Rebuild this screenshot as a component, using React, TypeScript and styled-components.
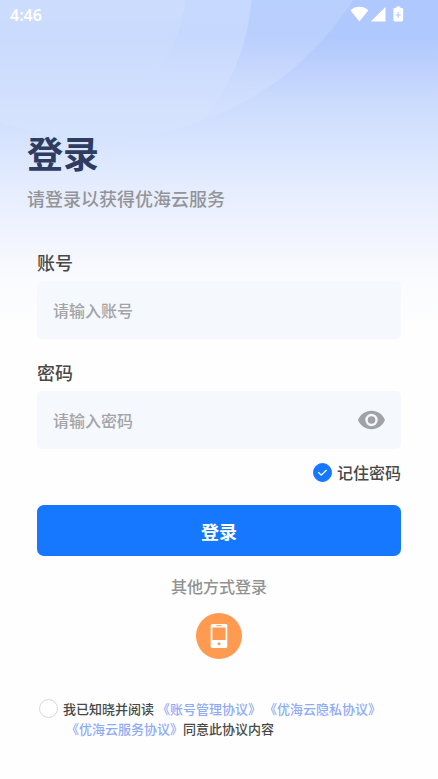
import React, { useState } from "react";
import styled, { createGlobalStyle } from "styled-components";

const GlobalStyle = createGlobalStyle`
  *, *::before, *::after { box-sizing: border-box; }
  body {
    margin: 0;
    background: #fefefe;
    font-family: "Noto Sans CJK SC", "Noto Sans", sans-serif;
    font-weight: 500;
    color: #484848;
  }
  button, input { font: inherit; color: inherit; }
`;

const Page = styled.div`
  position: relative;
  isolation: isolate;
  min-height: 100vh;
  overflow: hidden;
  background: linear-gradient(
    180deg,
    #afc8fd 0,
    #afc8fd 36px,
    #bdd0fd 66px,
    #ccdcfd 104px,
    #dae6fe 152px,
    #e7eefe 196px,
    #f2f5fe 240px,
    #fafbfe 280px,
    #fefefe 330px
  );
`;

const Backdrop = styled.svg`
  position: absolute;
  z-index: -1;
  top: 0;
  left: 0;
`;

const StatusBar = styled.header`
  display: flex;
  align-items: center;
  justify-content: space-between;
  height: 30px;
  padding: 0 33px 0 10px;
  color: #ffffff;
`;

const Clock = styled.time`
  font-family: "Noto Sans", sans-serif;
  font-size: 16px;
  font-weight: 600;
  line-height: 30px;
`;

const StatusIcons = styled.svg`
  display: block;
  margin-bottom: 1px;
`;

const Intro = styled.section`
  padding: 98px 27px 0;
`;

const Title = styled.h1`
  margin: 0;
  font-size: 36px;
  font-weight: 700;
  line-height: 48px;
  color: #2f3c62;
`;

const Subtitle = styled.p`
  margin: 10px 0 0;
  font-size: 18px;
  line-height: 24px;
  color: #939498;
`;

const Form = styled.form`
  display: flex;
  flex-direction: column;
  padding: 40px 37px 0;
`;

const Field = styled.div`
  display: flex;
  flex-direction: column;
  gap: 7px;

  & + & { margin-top: 21px; }
`;

const FieldLabel = styled.label`
  font-size: 18px;
  line-height: 24px;
`;

const InputBox = styled.div`
  display: flex;
  align-items: center;
  height: 58px;
  padding: 0 16px;
  border-radius: 5px;
  background: #f5f8fd;
`;

const TextInput = styled.input`
  flex: 1;
  min-width: 0;
  padding: 0;
  border: 0;
  outline: 0;
  background: transparent;
  font-size: 16px;
  line-height: 24px;

  &::placeholder { color: #a2a4a7; opacity: 1; }
`;

const IconButton = styled.button`
  display: flex;
  padding: 0;
  border: 0;
  background: transparent;
  color: #a0a2a5;
  cursor: pointer;
`;

const Remember = styled.label`
  display: flex;
  align-items: center;
  align-self: flex-end;
  gap: 5px;
  margin-top: 13px;
  font-size: 16px;
  line-height: 20px;
  cursor: pointer;
`;

const CheckWrap = styled.span`
  display: grid;
  flex: none;
  place-items: center;
  width: 19px;
  height: 19px;

  & > * { grid-area: 1 / 1; }
`;

const Check = styled.input`
  appearance: none;
  width: 19px;
  height: 19px;
  margin: 0;
  border: 1px solid #d8d8d8;
  border-radius: 50%;
  background: #ffffff;
  cursor: pointer;

  &:checked { border-color: #1677ff; background: #1677ff; }
  & + svg { visibility: hidden; pointer-events: none; }
  &:checked + svg { visibility: visible; }
`;

const SubmitButton = styled.button`
  height: 51px;
  margin-top: 23px;
  padding: 0;
  border: 0;
  border-radius: 7px;
  background: #1677ff;
  color: #ffffff;
  font-size: 18px;
  font-weight: 700;
  cursor: pointer;
`;

const Alternatives = styled.section`
  display: flex;
  flex-direction: column;
  align-items: center;
  gap: 17px;
  margin-top: 20px;
`;

const AlternativesTitle = styled.h2`
  margin: 0;
  font-size: 16px;
  font-weight: 500;
  line-height: 20px;
  color: #929292;
`;

const PhoneButton = styled.button`
  display: grid;
  place-items: center;
  width: 46px;
  height: 46px;
  padding: 0;
  border: 0;
  border-radius: 50%;
  background: #fe9b50;
  cursor: pointer;
`;

const Agreement = styled.section`
  display: flex;
  align-items: flex-start;
  gap: 5px;
  padding: 40px 37px 20px 39px;
  font-size: 13px;
  line-height: 20px;
`;

const AgreementText = styled.p`
  flex: 1;
  margin: 0;
`;

const AgreementLink = styled.a`
  display: inline-block;
  margin-left: 3px;
  color: #8fabf8;
  text-decoration: none;
`;

function CheckCircle(props: React.InputHTMLAttributes<HTMLInputElement>) {
  return (
    <CheckWrap>
      <Check type="checkbox" {...props} />
      <svg width="11" height="9" viewBox="0 0 11 9" fill="none" aria-hidden="true">
        <path d="M1.3 4.3 4.3 7.2 9.600 2" stroke="#fff" strokeWidth="1.3" />
      </svg>
    </CheckWrap>
  );
}

export default function App() {
  const [visible, setVisible] = useState(false);

  return (
    <Page>
      <GlobalStyle />
      <Backdrop width="438" height="200" viewBox="0 0 438 200" aria-hidden="true">
        <defs>
          <linearGradient id="fade" gradientUnits="userSpaceOnUse" x1="0" y1="0" x2="0" y2="140">
            <stop offset="0" stopColor="#fff" stopOpacity="0.13" />
            <stop offset="0.6" stopColor="#fff" stopOpacity="0.14" />
            <stop offset="1" stopColor="#fff" stopOpacity="0.03" />
          </linearGradient>
          <linearGradient id="glow" gradientUnits="userSpaceOnUse" x1="0" y1="0" x2="0" y2="140">
            <stop offset="0" stopColor="#dce7ff" stopOpacity="0.4" />
            <stop offset="0.5" stopColor="#dae7ff" stopOpacity="0.35" />
            <stop offset="1" stopColor="#dae7ff" stopOpacity="0" />
          </linearGradient>
          <linearGradient id="core" gradientUnits="userSpaceOnUse" x1="0" y1="0" x2="0" y2="90">
            <stop offset="0" stopColor="#dce9ff" stopOpacity="0.26" />
            <stop offset="1" stopColor="#dce9ff" stopOpacity="0" />
          </linearGradient>
          <clipPath id="outer">
            <circle cx="99" cy="-163" r="302" />
          </clipPath>
        </defs>
        <circle cx="99" cy="-163" r="302" fill="url(#fade)" />
        <g clipPath="url(#outer)">
          <circle cx="44" cy="-15" r="208" fill="url(#glow)" />
          <circle cx="40" cy="-15" r="146" fill="url(#core)" />
        </g>
      </Backdrop>

      <StatusBar>
        <Clock>4:46</Clock>
        <StatusIcons width="55" height="17" viewBox="0 0 55 17" fill="currentColor" aria-hidden="true">
          <path d="M.4 4.2C5.7-.3 13.1-.3 18.4 4.2L9.4 15.6Z" />
          <path d="M35.5 1v14.4H20.8Z" />
          <path
            fillRule="evenodd"
            d="M46.3.4h4v1.500h1.500q1.400 0 1.400 1.400v10.800q0 1.400-1.400 1.400h-7q-1.400 0-1.400-1.400V3.300q0-1.400 1.400-1.400h1.500ZM47.700 6v2.500h-2v1h2v2.500h1V9.500h2v-1h-2V6Z"
          />
        </StatusIcons>
      </StatusBar>

      <main>
        <Intro>
          <Title>登录</Title>
          <Subtitle>请登录以获得优海云服务</Subtitle>
        </Intro>

        <Form onSubmit={(event) => event.preventDefault()}>
          <Field>
            <FieldLabel htmlFor="account">账号</FieldLabel>
            <InputBox>
              <TextInput id="account" type="text" placeholder="请输入账号" />
            </InputBox>
          </Field>
          <Field>
            <FieldLabel htmlFor="password">密码</FieldLabel>
            <InputBox>
              <TextInput id="password" type={visible ? "text" : "password"} placeholder="请输入密码" />
              <IconButton type="button" aria-label="显示密码" onClick={() => setVisible(!visible)}>
                <svg width="27" height="20" viewBox="0 0 27 20" fill="currentColor" aria-hidden="true">
                  <path
                    fillRule="evenodd"
                    d="M13.5.8C7.4.8 2.2 4.5 0 10c2.2 5.5 7.4 9.2 13.5 9.2S24.8 15.5 27 10C24.8 4.5 19.6.8 13.5.8Zm0 15.4a6.200 6.200 0 1 1 0-12.400 6.200 6.200 0 0 1 0 12.400Z"
                  />
                  <circle cx="13.5" cy="10" r="3.8" />
                </svg>
              </IconButton>
            </InputBox>
          </Field>
          <Remember>
            <CheckCircle defaultChecked />
            记住密码
          </Remember>
          <SubmitButton type="submit">登录</SubmitButton>
        </Form>

        <Alternatives>
          <AlternativesTitle>其他方式登录</AlternativesTitle>
          <PhoneButton type="button" aria-label="手机登录">
            <svg width="18" height="26" viewBox="0 0 18 26" aria-hidden="true">
              <rect x="0.7" y="1" width="16.6" height="24" rx="1.5" fill="#fff" />
              <path d="M2.4 4.5h13.2v12.500H2.400Z" fill="#fe9b50" />
              <path d="M6.5 2.700h5" stroke="#fe9b50" strokeWidth="1" />
              <circle cx="9" cy="20.8" r="1.5" fill="#fe9b50" />
            </svg>
          </PhoneButton>
        </Alternatives>

        <Agreement>
          <CheckCircle aria-labelledby="agreement" />
          <AgreementText id="agreement">
            我已知晓并阅读
            <AgreementLink href="#account-agreement">《账号管理协议》</AgreementLink>
            <AgreementLink href="#privacy-agreement">《优海云隐私协议》</AgreementLink>
            <AgreementLink href="#service-agreement">《优海云服务协议》</AgreementLink>
            同意此协议内容
          </AgreementText>
        </Agreement>
      </main>
    </Page>
  );
}
